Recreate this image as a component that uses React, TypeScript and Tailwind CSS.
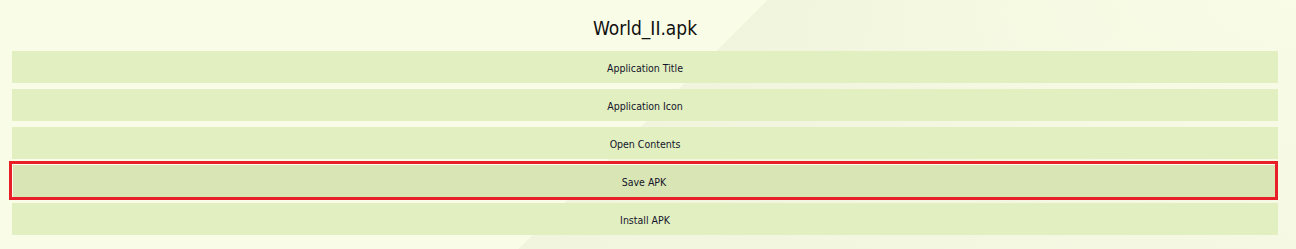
import React from "react";

const items = ["Application Title", "Application Icon", "Open Contents", "Save APK", "Install APK"];

export default function App() {
  return (
    <div className="w-[1296px] h-[249px] overflow-hidden bg-[radial-gradient(ellipse_500px_260px_at_100%_0%,rgba(249,253,231,0.9),rgba(249,253,231,0)),linear-gradient(135deg,#f9fde7_0%,#f9fde7_49.7%,#f2f5de_49.7%,#f5f8e2_100%)] pl-3 pr-[18px] font-['DejaVu_Sans_Condensed','DejaVu_Sans',sans-serif] text-[#14142a]">
      <div className="h-[51px] flex items-center justify-center pt-[5px] text-[19px] text-[#111]">World_II.apk</div>
      <div className="flex flex-col gap-1.5">
        {items.map((t) =>
          t === "Save APK" ? (
            <div key={t} className="-mt-1 -mb-[3px] -ml-[3px] border-[3px] border-[#e81f27]">
              <div className="h-[33px] pt-[3px] border-t border-l border-[#fbfdf0] bg-[#d9e5b4] flex items-center justify-center text-[10.5px]">
                {t}
              </div>
            </div>
          ) : (
            <div key={t} className="h-8 pt-[3px] bg-[#e2efc1] flex items-center justify-center text-[10.5px]">
              {t}
            </div>
          )
        )}
      </div>
    </div>
  );
}
